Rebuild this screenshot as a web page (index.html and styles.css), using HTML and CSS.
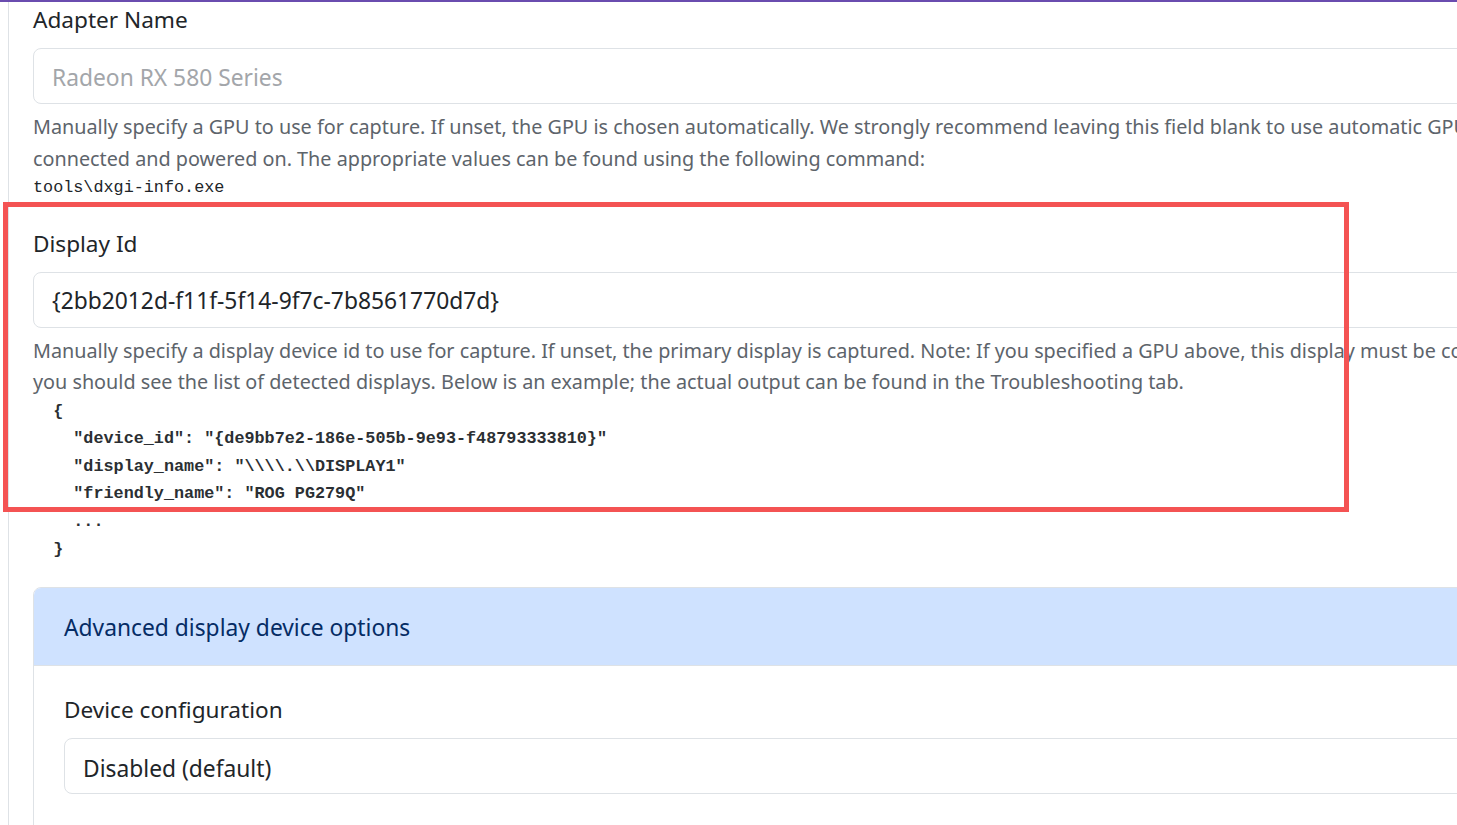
FILE: index.html
```html
<!DOCTYPE html>
<html lang="en">
<head>
<meta charset="utf-8">
<title>Capture settings</title>
<link rel="stylesheet" href="styles.css">
</head>
<body>
<div class="topbar"></div>
<div class="shell">
  <div class="card">
    <div class="field">
      <label class="form-label" for="adapter">Adapter Name</label>
      <input class="form-control" id="adapter" type="text" placeholder="Radeon RX 580 Series">
      <div class="form-text">Manually specify a GPU to use for capture. If unset, the GPU is chosen automatically. We strongly recommend leaving this field blank to use automatic GPU selection!<br>connected and powered on. The appropriate values can be found using the following command:</div>
      <pre class="code">tools\dxgi-info.exe</pre>
    </div>
    <div class="field field-display">
      <label class="form-label" for="display">Display Id</label>
      <input class="form-control" id="display" type="text" value="{2bb2012d-f11f-5f14-9f7c-7b8561770d7d}">
      <div class="form-text">Manually specify a display device id to use for capture. If unset, the primary display is captured. Note: If you specified a GPU above, this display must be connected to that GPU.<br>you should see the list of detected displays. Below is an example; the actual output can be found in the Troubleshooting tab.</div>
      <pre class="code json">  {
    "device_id": "{de9bb7e2-186e-505b-9e93-f48793333810}"
    "display_name": "\\\\.\\DISPLAY1"
    "friendly_name": "ROG PG279Q"
    ...
  }</pre>
    </div>
    <div class="accordion">
      <div class="accordion-header">Advanced display device options</div>
      <div class="accordion-body">
        <label class="form-label" for="config">Device configuration</label>
        <div class="form-select" id="config">Disabled (default)</div>
      </div>
    </div>
  </div>
  <div class="highlight"></div>
</div>
</body>
</html>
```
FILE: styles.css
```css
html, body {
  margin: 0;
  padding: 0;
  background: #ffffff;
  overflow: hidden;
  height: 100%;
}

body {
  font-family: "Noto Sans", "Open Sans", sans-serif;
  color: #212529;
}

.topbar {
  height: 2px;
  background: #6a4caf;
}

.shell {
  position: relative;
  padding-left: 8px;
  height: 823px;
}

.card {
  width: 1700px;
  height: 100%;
  border-left: 1px solid #dee2e6;
  padding: 3px 0 0 24px;
  box-sizing: border-box;
}

.field {
  display: flex;
  flex-direction: column;
  align-items: flex-start;
  margin-bottom: 27px;
}

.form-label {
  display: block;
  font-size: 22.6px;
  line-height: 30px;
  margin-bottom: 13px;
  color: #212529;
}

.form-control,
.form-select {
  box-sizing: border-box;
  width: 1600px;
  height: 56px;
  border: 1px solid #dee2e6;
  border-radius: 8px;
  padding: 2px 18px 0;
  font-family: inherit;
  font-size: 22.8px;
  color: #212529;
  background: #fff;
  outline: none;
}

.form-select {
  display: flex;
  align-items: center;
  padding-top: 4px;
}

.form-control::placeholder {
  color: #a3a6aa;
}

.form-text {
  margin-top: 7px;
  font-size: 19.8px;
  line-height: 31.5px;
  color: #5d646b;
  white-space: nowrap;
}

.code {
  margin: 0;
  font-family: "Liberation Mono", "DejaVu Sans Mono", monospace;
  font-size: 16.8px;
  line-height: 27.6px;
  color: #212529;
}

.json {
  font-weight: bold;
  color: #2b2f33;
}

.field-display {
  margin-bottom: 24px;
}

.accordion {
  width: 1640px;
  border: 1px solid #dee2e6;
  border-radius: 8px 8px 0 0;
  height: 260px;
}

.accordion-header {
  background: #cfe2ff;
  color: #052c65;
  font-size: 22.8px;
  line-height: 30px;
  padding: 25px 30px 22px;
  border-bottom: 1px solid #dee2e6;
  border-radius: 7px 7px 0 0;
}

.accordion-body {
  padding: 29px 30px 0;
}

.highlight {
  position: absolute;
  left: 3px;
  top: 200px;
  width: 1346px;
  height: 310px;
  box-sizing: border-box;
  border: 5px solid #f45353;
}
```
